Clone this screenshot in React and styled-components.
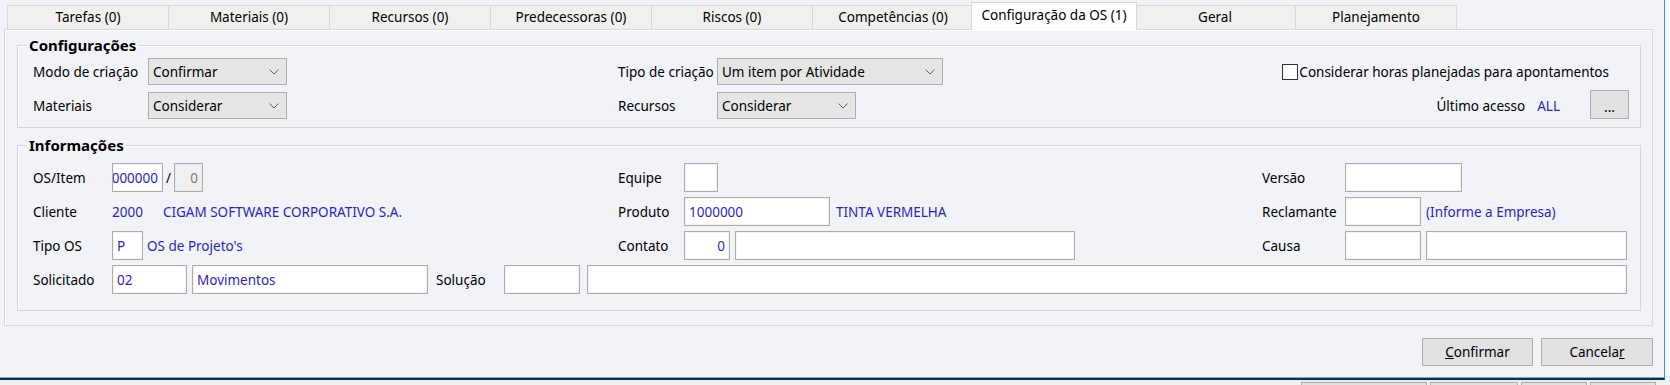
import React from 'react';
import styled, { createGlobalStyle } from 'styled-components';

const BLUE = '#2b27b4';

const GlobalStyle = createGlobalStyle`
  html, body {
    margin: 0;
    padding: 0;
  }
  body {
    background: #f0f0f0;
    font-family: "Noto Sans", "Segoe UI", Arial, sans-serif;
    font-size: 13.5px;
    color: #000;
  }
`;

const Screen = styled.div`
  width: 1670px;
  height: 385px;
  overflow: hidden;
  display: flex;
  flex-direction: column;
  background: #f0f0f0;
`;

const WindowRow = styled.div`
  display: flex;
  height: 380px;
  flex: none;
`;

const Window = styled.div`
  width: 1665px;
  height: 380px;
  box-sizing: border-box;
  background: #f2f3f8;
  border-right: 1px solid #2e96d6;
  border-bottom: 2px solid #1b2c38;
  box-shadow: inset 0 -1px 0 #5cb8e8;
  display: flex;
  flex-direction: column;
`;

const RightStrip = styled.div`
  flex: 1;
  background: #f6f7f9;
`;

const BottomStrip = styled.div`
  flex: 1;
  display: flex;
  align-items: flex-end;
  gap: 3px;
  padding-left: 1301px;
  background: #f0f0f0;
`;

const PeekButton = styled.div`
  width: ${p => p.$w}px;
  height: 3px;
  box-sizing: border-box;
  border: 1px solid #adadad;
  border-bottom: none;
  background: #e1e1e1;
`;

/* ---------- tabs ---------- */

const TabStrip = styled.div`
  display: flex;
  padding: 5px 0 0 7px;
  height: 29px;
  box-sizing: border-box;
  position: relative;
  z-index: 1;
`;

const Tab = styled.div`
  width: ${p => (p.$active ? 166 : 162)}px;
  height: ${p => (p.$active ? 28 : 24)}px;
  margin: ${p => (p.$active ? '-3px -2px 0 -3px' : '0 0 0 -1px')};
  &:first-child {
    margin-left: 0;
  }
  box-sizing: border-box;
  border: 1px solid #d9d9d9;
  border-bottom: none;
  background: ${p => (p.$active ? '#ffffff' : '#f0f0f0')};
  display: flex;
  align-items: center;
  justify-content: center;
  padding-bottom: ${p => (p.$active ? 4 : 1)}px;
  white-space: nowrap;
  position: relative;
  z-index: ${p => (p.$active ? 2 : 1)};
`;

const TabPage = styled.div`
  margin-left: 4px;
  width: 1649px;
  height: 297px;
  box-sizing: border-box;
  border: 1px solid #d9d9d9;
  box-shadow: inset 1px 1px 0 #ffffff;
  padding: 7px 11px 0 12px;
  display: flex;
  flex-direction: column;
  gap: 9px;
`;

/* ---------- group boxes ---------- */

const Group = styled.fieldset`
  margin: 0;
  min-width: 0;
  border: 1px solid #d6d6d6;
  box-shadow: inset 1px 1px 0 #ffffff;
  padding: ${p => p.$pt}px ${p => p.$pr}px ${p => p.$pb}px 15px;
`;

const Legend = styled.legend`
  margin-left: -6px;
  padding: 0 2px;
  font-weight: bold;
  font-size: 15px;
  line-height: 16px;
`;

const FormGrid = styled.div`
  display: grid;
  grid-template-columns: 585px 644px 1fr;
  grid-auto-rows: ${p => p.$row}px;
  row-gap: ${p => p.$gap}px;
`;

const Cell = styled.div`
  display: flex;
  align-items: center;
  justify-content: ${p => (p.$end ? 'flex-end' : 'flex-start')};
  gap: ${p => p.$gap ?? 5}px;
  grid-column: ${p => (p.$span ? '1 / -1' : 'auto')};
  white-space: nowrap;
`;

const Label = styled.span`
  width: ${p => p.$w}px;
  flex: none;
  white-space: nowrap;
  margin-left: ${p => p.$ml ?? 0}px;
  margin-right: ${p => -(p.$gap ?? 5)}px;
`;

const Text = styled.span`
  color: ${p => (p.$plain ? '#000' : BLUE)};
  margin-left: ${p => p.$ml ?? 0}px;
  margin-right: ${p => p.$mr ?? 0}px;
`;

const Select = styled.div`
  width: ${p => p.$w}px;
  height: 27px;
  box-sizing: border-box;
  border: 1px solid #adadad;
  background: #e5e5e5;
  display: flex;
  align-items: center;
  justify-content: space-between;
  padding: 0 7px 0 4px;
  flex: none;
`;

const Field = styled.div`
  width: ${p => (p.$w ? `${p.$w}px` : 'auto')};
  flex: ${p => (p.$w ? 'none' : '1')};
  height: 29px;
  margin-left: ${p => p.$ml ?? 0}px;
  box-sizing: border-box;
  border: 1px solid #acacac;
  box-shadow: inset 0 0 0 1px ${p => (p.$disabled ? '#ececec' : '#f4f4f4')};
  background: ${p => (p.$disabled ? '#f0f0f0' : '#ffffff')};
  color: ${p => (p.$disabled ? '#7a7a7a' : BLUE)};
  display: flex;
  align-items: center;
  justify-content: ${p => (p.$right ? 'flex-end' : 'flex-start')};
  padding: 0 4px;
  overflow: hidden;
  white-space: nowrap;
`;

const Slash = styled.span`
  margin: 0 -2px;
`;

const CheckBox = styled.span`
  width: 16px;
  height: 16px;
  box-sizing: border-box;
  border: 1px solid #333333;
  background: #ffffff;
  flex: none;
`;

const SmallButton = styled.div`
  width: 39px;
  height: 29px;
  margin-top: -2px;
  margin-left: 30px;
  box-sizing: border-box;
  border: 1px solid #adadad;
  background: #e1e1e1;
  display: flex;
  align-items: flex-end;
  justify-content: center;
  padding-bottom: 4px;
  line-height: 1;
`;

/* ---------- footer ---------- */

const Footer = styled.div`
  display: flex;
  justify-content: flex-end;
  gap: 8px;
  padding: 12px 11px 0 0;
`;

const Button = styled.div`
  width: ${p => p.$w}px;
  height: 28px;
  box-sizing: border-box;
  border: 1px solid #adadad;
  background: #e1e1e1;
  display: flex;
  align-items: center;
  justify-content: center;
  padding-bottom: 1px;
`;

const Chevron = () => (
  <svg width="10" height="6" viewBox="0 0 10 6">
    <polyline points="0.5,0.5 5,5 9.5,0.5" fill="none" stroke="#606060" strokeWidth="1" />
  </svg>
);

const tabs = [
  'Tarefas (0)',
  'Materiais (0)',
  'Recursos (0)',
  'Predecessoras (0)',
  'Riscos (0)',
  'Competências (0)',
  'Configuração da OS (1)',
  'Geral',
  'Planejamento',
];

export default function App() {
  return (
    <>
      <GlobalStyle />
      <Screen>
        <WindowRow>
          <Window>
            <TabStrip>
              {tabs.map((t, i) => (
                <Tab key={t} $active={i === 6}>{t}</Tab>
              ))}
            </TabStrip>

            <TabPage>
              <Group $pt={5} $pr={11} $pb={8}>
                <Legend>Configurações</Legend>
                <FormGrid $row={27} $gap={7}>
                  <Cell>
                    <Label $w={115}>Modo de criação</Label>
                    <Select $w={139}>Confirmar<Chevron /></Select>
                  </Cell>
                  <Cell>
                    <Label $w={99}>Tipo de criação</Label>
                    <Select $w={226}>Um item por Atividade<Chevron /></Select>
                  </Cell>
                  <Cell $end $gap={1}>
                    <CheckBox />
                    <Text $plain $mr={20}>Considerar horas planejadas para apontamentos</Text>
                  </Cell>

                  <Cell>
                    <Label $w={115}>Materiais</Label>
                    <Select $w={139}>Considerar<Chevron /></Select>
                  </Cell>
                  <Cell>
                    <Label $w={99}>Recursos</Label>
                    <Select $w={139}>Considerar<Chevron /></Select>
                  </Cell>
                  <Cell $end $gap={0}>
                    <Text $plain>Último acesso</Text>
                    <Text $ml={12}>ALL</Text>
                    <SmallButton>...</SmallButton>
                  </Cell>
                </FormGrid>
              </Group>

              <Group $pt={10} $pr={13} $pb={16}>
                <Legend>Informações</Legend>
                <FormGrid $row={29} $gap={5}>
                  <Cell>
                    <Label $w={79}>OS/Item</Label>
                    <Field $w={51} $right>1000000</Field>
                    <Slash>/</Slash>
                    <Field $w={29} $right $disabled>0</Field>
                  </Cell>
                  <Cell>
                    <Label $w={66}>Equipe</Label>
                    <Field $w={34} />
                  </Cell>
                  <Cell>
                    <Label $w={83}>Versão</Label>
                    <Field $w={117} />
                  </Cell>

                  <Cell>
                    <Label $w={79}>Cliente</Label>
                    <Text>2000</Text>
                    <Text $ml={15}>CIGAM SOFTWARE CORPORATIVO S.A.</Text>
                  </Cell>
                  <Cell>
                    <Label $w={66}>Produto</Label>
                    <Field $w={146}>1000000</Field>
                    <Text $ml={1}>TINTA VERMELHA</Text>
                  </Cell>
                  <Cell>
                    <Label $w={83}>Reclamante</Label>
                    <Field $w={76} />
                    <Text>(Informe a Empresa)</Text>
                  </Cell>

                  <Cell>
                    <Label $w={79}>Tipo OS</Label>
                    <Field $w={31}>P</Field>
                    <Text $ml={-1}>OS de Projeto's</Text>
                  </Cell>
                  <Cell>
                    <Label $w={66}>Contato</Label>
                    <Field $w={46} $right>0</Field>
                    <Field $w={340} />
                  </Cell>
                  <Cell>
                    <Label $w={83}>Causa</Label>
                    <Field $w={76} />
                    <Field />
                  </Cell>

                  <Cell $span>
                    <Label $w={79}>Solicitado</Label>
                    <Field $w={75}>02</Field>
                    <Field $w={236}>Movimentos</Field>
                    <Label $w={68} $ml={3}>Solução</Label>
                    <Field $w={76} />
                    <Field $ml={2} />
                  </Cell>
                </FormGrid>
              </Group>
            </TabPage>

            <Footer>
              <Button $w={111}><span><u>C</u>onfirmar</span></Button>
              <Button $w={112}><span>Cancela<u>r</u></span></Button>
            </Footer>
          </Window>
          <RightStrip />
        </WindowRow>
        <BottomStrip>
          <PeekButton $w={126} />
          <PeekButton $w={88} />
          <PeekButton $w={66} />
          <PeekButton $w={66} />
        </BottomStrip>
      </Screen>
    </>
  );
}
